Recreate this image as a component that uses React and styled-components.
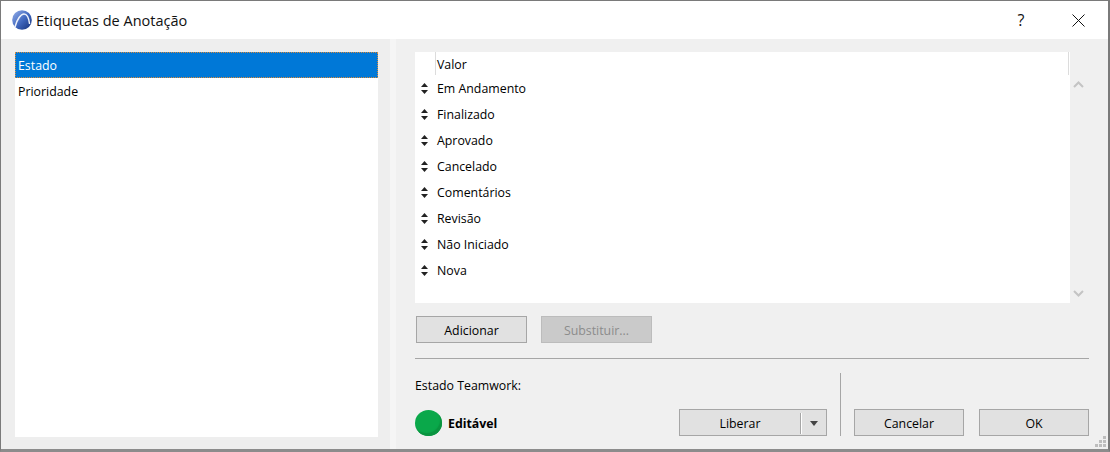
import React from "react";
import styled, { createGlobalStyle } from "styled-components";

const FONT = `"Open Sans", "Noto Sans", sans-serif`;

const Global = createGlobalStyle`
  html, body { margin: 0; padding: 0; background: #fff; }
  body { width: 1110px; height: 452px; overflow: hidden; font-family: ${FONT}; font-size: 12.35px; color: #000; }
`;

const Dialog = styled.div`
  box-sizing: border-box;
  width: 1110px;
  height: 452px;
  border-style: solid;
  border-color: #7a7a7a #7a7a7a #8c8c8c #7a7a7a;
  border-width: 1px 2px 3px 1px;
  background: #f5f5f5;
  display: flex;
  flex-direction: column;
  position: relative;
`;

const TitleBar = styled.div`
  height: 38px;
  flex: none;
  background: #fff;
  display: flex;
  align-items: center;
  padding-left: 11px;
`;

const AppTitle = styled.span`
  font-size: 14.5px;
  margin-left: 4px;
  color: #111;
  flex: 1;
`;

const TitleBtn = styled.button`
  width: ${p => p.$w}px;
  height: 38px;
  border: 0;
  background: none;
  padding: 0;
  display: flex;
  align-items: center;
  justify-content: center;
  font: 400 16px ${FONT};
  color: #111;
`;

const Body = styled.div`
  flex: 1;
  display: flex;
  min-height: 0;
`;

const LeftPane = styled.div`
  width: 389px;
  flex: none;
  box-sizing: border-box;
  padding: 13px 12px 12px 14px;
  background: #eeeeee;
  display: flex;
`;

const TagList = styled.div`
  flex: 1;
  background: #fff;
`;

const TagRow = styled.div`
  box-sizing: border-box;
  height: 26px;
  padding-left: 3px;
  display: flex;
  align-items: center;
  ${p => p.$selected && `
    background: #0078d7;
    color: #fff;
    border: 1px dotted #d98a3a;
    padding-left: 2px;
  `}
`;

const RightPane = styled.div`
  flex: 1;
  box-sizing: border-box;
  margin-left: 6px;
  padding: 13px 19px 13px 19px;
  background: #f0f0f0;
  display: flex;
  flex-direction: column;
`;

const TableWrap = styled.div`
  display: flex;
  height: 251px;
  flex: none;
`;

const Table = styled.div`
  width: 655px;
  background: #fff;
  flex: none;
`;

const HeaderRow = styled.div`
  height: 23px;
  width: 653px;
  display: flex;
  box-shadow: 1px 0 0 #dcdcdc;
`;

const HeaderCell = styled.div`
  margin-left: 20px;
  padding: 2px 0 0 1px;
  border-left: 1px solid #dcdcdc;
  flex: 1;
  display: flex;
  align-items: center;
`;

const ValueRow = styled.div`
  height: 26px;
  display: flex;
  align-items: center;
`;

const Handle = styled.svg`
  width: 7px;
  height: 11px;
  margin-left: 6px;
  flex: none;
`;

const ValueText = styled.span`
  margin-left: 9px;
`;

const ScrollCol = styled.div`
  flex: 1;
  display: flex;
  flex-direction: column;
  justify-content: space-between;
  align-items: center;
  padding: 29px 0 6px;
  box-sizing: border-box;
`;

const Chevron = styled.svg`
  width: 11px;
  height: 7px;
  margin-right: 3px;
`;

const ActionRow = styled.div`
  display: flex;
  gap: 14px;
  margin: 13px 0 0 1px;
`;

const Button = styled.button`
  box-sizing: border-box;
  width: ${p => p.$w || 110}px;
  height: 27px;
  border: 1px solid ${p => (p.$disabled ? "#bcbcbc" : "#a6a6a6")};
  background: ${p => (p.$disabled ? "#cacaca" : "#e1e1e1")};
  color: ${p => (p.$disabled ? "#8c8c8c" : "#000")};
  font: 12.35px ${FONT};
  padding: 1px 0 0;
  display: flex;
  align-items: center;
  justify-content: center;
`;

const Rule = styled.div`
  height: 1px;
  background: #a6a6a6;
  margin-top: 15px;
  flex: none;
`;

const Footer = styled.div`
  flex: 1;
  display: flex;
  align-items: stretch;
  padding-top: 14px;
`;

const StatusCol = styled.div`
  width: 264px;
  display: flex;
  flex-direction: column;
  justify-content: space-between;
  padding-top: 4px;
`;

const StatusValue = styled.div`
  display: flex;
  align-items: center;
  gap: 6px;
  font-weight: 700;
`;

const Dot = styled.span`
  width: 27px;
  height: 26px;
  border-radius: 50%;
  background: #0aa84a;
  box-shadow: inset -2px -3px 1px #0a9440;
  flex: none;
`;

const FooterRight = styled.div`
  flex: 1;
  display: flex;
  align-items: flex-end;
`;

const SplitButton = styled(Button)`
  width: 148px;
`;

const SplitLabel = styled.span`
  flex: 1;
  text-align: center;
`;

const SplitArrow = styled.span`
  width: 25px;
  height: 21px;
  flex: none;
  border-left: 1px solid #a6a6a6;
  box-shadow: inset 1px 0 0 #fff;
  display: flex;
  align-items: center;
  justify-content: center;
  &::after {
    content: "";
    border: 4px solid transparent;
    border-top: 5px solid #444;
    border-bottom: 0;
  }
`;

const VRule = styled.div`
  width: 1px;
  height: 63px;
  background: #a6a6a6;
  margin: 0 13px;
`;

const OkGap = styled.div`
  width: 15px;
`;

const Grip = styled.svg`
  position: absolute;
  right: 2px;
  bottom: 2px;
  width: 11px;
  height: 11px;
`;

const values = ["Em Andamento", "Finalizado", "Aprovado", "Cancelado", "Comentários", "Revisão", "Não Iniciado", "Nova"];

export default function App() {
  return (
    <>
      <Global />
      <Dialog>
        <TitleBar>
          <svg width="20" height="20" viewBox="0 0 20 20">
            <defs>
              <linearGradient id="g" x1="0.1" y1="0.1" x2="0.9" y2="0.9">
                <stop offset="0" stopColor="#86a3e2" />
                <stop offset="0.55" stopColor="#3f66bd" />
                <stop offset="1" stopColor="#1c3a86" />
              </linearGradient>
            </defs>
            <circle cx="10" cy="10" r="9.8" fill="url(#g)" />
            <path d="M3 17 C5 9 9 4 12 4 C15 4 17 9 17.6 14" fill="none" stroke="#eef2fb" strokeWidth="1.5" />
          </svg>
          <AppTitle>Etiquetas de Anotação</AppTitle>
          <TitleBtn $w={54}>?</TitleBtn>
          <TitleBtn $w={60}>
            <svg width="13" height="13" viewBox="0 0 13 13"><path d="M.5.5l12 12M12.5.5l-12 12" stroke="#111" fill="none" /></svg>
          </TitleBtn>
        </TitleBar>
        <Body>
          <LeftPane>
            <TagList>
              <TagRow $selected>Estado</TagRow>
              <TagRow>Prioridade</TagRow>
            </TagList>
          </LeftPane>
          <RightPane>
            <TableWrap>
              <Table>
                <HeaderRow><HeaderCell>Valor</HeaderCell></HeaderRow>
                {values.map(v => (
                  <ValueRow key={v}>
                    <Handle viewBox="0 0 7 11"><path d="M3.5 0L7 4H0zM3.5 11L0 7h7z" fill="#222" /></Handle>
                    <ValueText>{v}</ValueText>
                  </ValueRow>
                ))}
              </Table>
              <ScrollCol>
                <Chevron viewBox="0 0 11 7"><path d="M1 6l4.5-4.5L10 6" fill="none" stroke="#c4c4c4" strokeWidth="2" /></Chevron>
                <Chevron viewBox="0 0 11 7"><path d="M1 1l4.5 4.5L10 1" fill="none" stroke="#c4c4c4" strokeWidth="2" /></Chevron>
              </ScrollCol>
            </TableWrap>
            <ActionRow>
              <Button $w={111}>Adicionar</Button>
              <Button $w={111} $disabled>Substituir...</Button>
            </ActionRow>
            <Rule />
            <Footer>
              <StatusCol>
                <span>Estado Teamwork:</span>
                <StatusValue><Dot />Editável</StatusValue>
              </StatusCol>
              <FooterRight>
                <SplitButton as="div">
                  <SplitLabel>Liberar</SplitLabel>
                  <SplitArrow />
                </SplitButton>
                <VRule />
                <Button>Cancelar</Button>
                <OkGap />
                <Button>OK</Button>
              </FooterRight>
            </Footer>
          </RightPane>
        </Body>
        <Grip viewBox="0 0 11 11">
          <path d="M8 0h3v3H8zM4 4h3v3H4zM8 4h3v3H8zM0 8h3v3H0zM4 8h3v3H4zM8 8h3v3H8z" fill="#bdbdbd" />
        </Grip>
      </Dialog>
    </>
  );
}
